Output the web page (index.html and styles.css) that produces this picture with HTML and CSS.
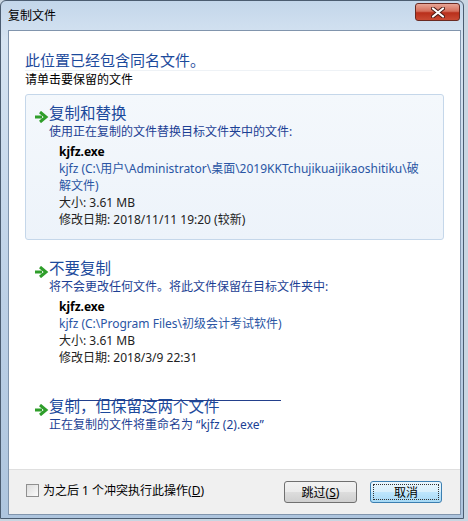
FILE: index.html
```html
<!DOCTYPE html>
<html lang="zh-CN">

<head>
    <meta charset="UTF-8">
    <title>复制文件</title>
    <link rel="stylesheet" href="styles.css">
</head>

<body>
    <div class="window">
        <div class="titlebar">
            <span class="title">复制文件</span>
            <button class="close-btn" aria-label="关闭">
                <svg width="14" height="11" viewBox="0 0 14 11">
                    <path d="M2 1.5 L12 9.5 M12 1.5 L2 9.5" stroke="#4a1a14" stroke-width="4" stroke-linecap="round" />
                    <path d="M2 1.5 L12 9.5 M12 1.5 L2 9.5" stroke="#fff" stroke-width="2.2" stroke-linecap="round" />
                </svg>
            </button>
        </div>

        <div class="client">
            <div class="content">
                <h1 class="instruction">此位置已经包含同名文件。</h1>
                <p class="subtitle">请单击要保留的文件</p>

                <div class="option option-active">
                    <svg class="arrow" width="14" height="12" viewBox="0 0 14 12">
                        <path d="M1 6 H8" stroke="#2f9e2a" stroke-width="3" />
                        <path d="M6 1 L12 6 L6 11" fill="none" stroke="#2f9e2a" stroke-width="3" />
                    </svg>
                    <div class="option-body">
                        <div class="option-title">复制和替换</div>
                        <div class="option-desc">使用正在复制的文件替换目标文件夹中的文件:</div>
                        <div class="file-info">
                            <div class="file-name">kjfz.exe</div>
                            <div class="file-path">kjfz (C:\用户\Administrator\桌面\2019KKTchujikuaijikaoshitiku\破解文件)</div>
                            <div>大小: 3.61 MB</div>
                            <div>修改日期: 2018/11/11 19:20 (较新)</div>
                        </div>
                    </div>
                </div>

                <div class="option">
                    <svg class="arrow" width="14" height="12" viewBox="0 0 14 12">
                        <path d="M1 6 H8" stroke="#2f9e2a" stroke-width="3" />
                        <path d="M6 1 L12 6 L6 11" fill="none" stroke="#2f9e2a" stroke-width="3" />
                    </svg>
                    <div class="option-body">
                        <div class="option-title">不要复制</div>
                        <div class="option-desc">将不会更改任何文件。将此文件保留在目标文件夹中:</div>
                        <div class="file-info">
                            <div class="file-name">kjfz.exe</div>
                            <div class="file-path">kjfz (C:\Program Files\初级会计考试软件)</div>
                            <div>大小: 3.61 MB</div>
                            <div>修改日期: 2018/3/9 22:31</div>
                        </div>
                    </div>
                </div>

                <div class="option option-last">
                    <span class="stray-line"></span>
                    <svg class="arrow" width="14" height="12" viewBox="0 0 14 12">
                        <path d="M1 6 H8" stroke="#2f9e2a" stroke-width="3" />
                        <path d="M6 1 L12 6 L6 11" fill="none" stroke="#2f9e2a" stroke-width="3" />
                    </svg>
                    <div class="option-body">
                        <div class="option-title">复制，但保留这两个文件</div>
                        <div class="option-desc">正在复制的文件将重命名为 “kjfz (2).exe”</div>
                    </div>
                </div>
            </div>

            <div class="footer">
                <label class="check">
                    <span class="checkbox"></span>
                    <span>为之后 1 个冲突执行此操作(<u>D</u>)</span>
                </label>
                <div class="buttons">
                    <button class="btn">跳过(<u>S</u>)</button>
                    <button class="btn btn-default">取消</button>
                </div>
            </div>
        </div>
    </div>
</body>

</html>
```

FILE: styles.css
```css
body {
    margin: 0;
    padding: 0;
    background-color: #c9d6e2;
    font-family: "Segoe UI", "Noto Sans", "Noto Sans CJK SC", sans-serif;
    font-size: 12px;
}

.window {
    width: 462px;
    height: 517px;
    display: flex;
    flex-direction: column;
    background: linear-gradient(to bottom, #c3d6ea, #d6e4f2 40px, #bcd0e6 300px, #aec5de);
    border: 1px solid #4b5c70;
    border-radius: 6px 6px 0 0;
}

.titlebar {
    height: 29px;
    display: flex;
    justify-content: space-between;
    align-items: flex-start;
    padding: 0 3px 0 7px;
}

.title {
    margin-top: 6px;
    line-height: 17px;
    color: #000;
    font-size: 12px;
}

.close-btn {
    width: 45px;
    height: 18px;
    margin-top: 2px;
    padding: 0;
    display: flex;
    justify-content: center;
    align-items: center;
    background: linear-gradient(to bottom, #e8a596, #d56f5c 45%, #b92f1b 55%, #c94a33);
    border: 1px solid #6a2a22;
    border-radius: 3px;
}

.client {
    flex: 1;
    display: flex;
    flex-direction: column;
    margin: 0 2px 3px 7px;
    background-color: #fff;
    border: 1px solid #8195ad;
}

.content {
    flex: 1;
    padding: 19px 16px 0 16px;
}

.instruction {
    margin: 0;
    font-size: 15px;
    font-weight: normal;
    line-height: 20px;
    color: #1c4a9c;
    border-bottom: 1px solid #eef2f6;
    margin-right: 12px;
}

.subtitle {
    margin: 1px 0 0 0;
    line-height: 16px;
    color: #000;
}

.option {
    position: relative;
    display: flex;
    margin-top: 6px;
    padding: 8px 14px 11px 7px;
    border: 1px solid transparent;
    border-radius: 3px;
}

.option + .option {
    margin-top: 9px;
}

.option-active {
    background: linear-gradient(to bottom, #f4f8fc, #edf3fa);
    border-color: #c5d7ea;
}

.arrow {
    flex: none;
    width: 16px;
    margin-top: 8px;
}

.option-title {
    font-size: 15.5px;
    line-height: 20px;
    color: #1c4a9c;
}

.option-desc {
    line-height: 17px;
    color: #1c3f94;
}

.file-info {
    margin: 3px 0 0 10px;
    line-height: 17px;
    color: #222;
}

.file-name {
    font-weight: bold;
    color: #000;
}

.file-path {
    color: #2a55a4;
}

.stray-line {
    position: absolute;
    top: 12px;
    left: 44px;
    width: 211px;
    height: 1px;
    background-color: #23408c;
}

.footer {
    height: 44px;
    display: flex;
    justify-content: space-between;
    align-items: center;
    padding: 0 18px 0 17px;
    background-color: #f0f0f0;
    border-top: 1px solid #dfdfdf;
}

.check {
    display: flex;
    align-items: center;
    gap: 4px;
    margin-top: -4px;
    color: #000;
}

.checkbox {
    width: 11px;
    height: 11px;
    border: 1px solid #8f8f8f;
    background: linear-gradient(135deg, #dcdcdc, #fbfbfb);
}

.buttons {
    display: flex;
    gap: 13px;
}

.btn {
    width: 73px;
    height: 22px;
    padding: 0;
    font-family: inherit;
    font-size: 12px;
    color: #000;
    background: linear-gradient(to bottom, #f2f2f2, #ebebeb 48%, #dddddd 52%, #cfcfcf);
    border: 1px solid #707070;
    border-radius: 3px;
}

.btn-default {
    width: 72px;
    background: linear-gradient(to bottom, #eaf6fd, #d9f0fc 48%, #bee6fd 52%, #a7d9f5);
    border-color: #3c7fb1;
    outline: 1px dotted #333;
    outline-offset: -4px;
}
```
